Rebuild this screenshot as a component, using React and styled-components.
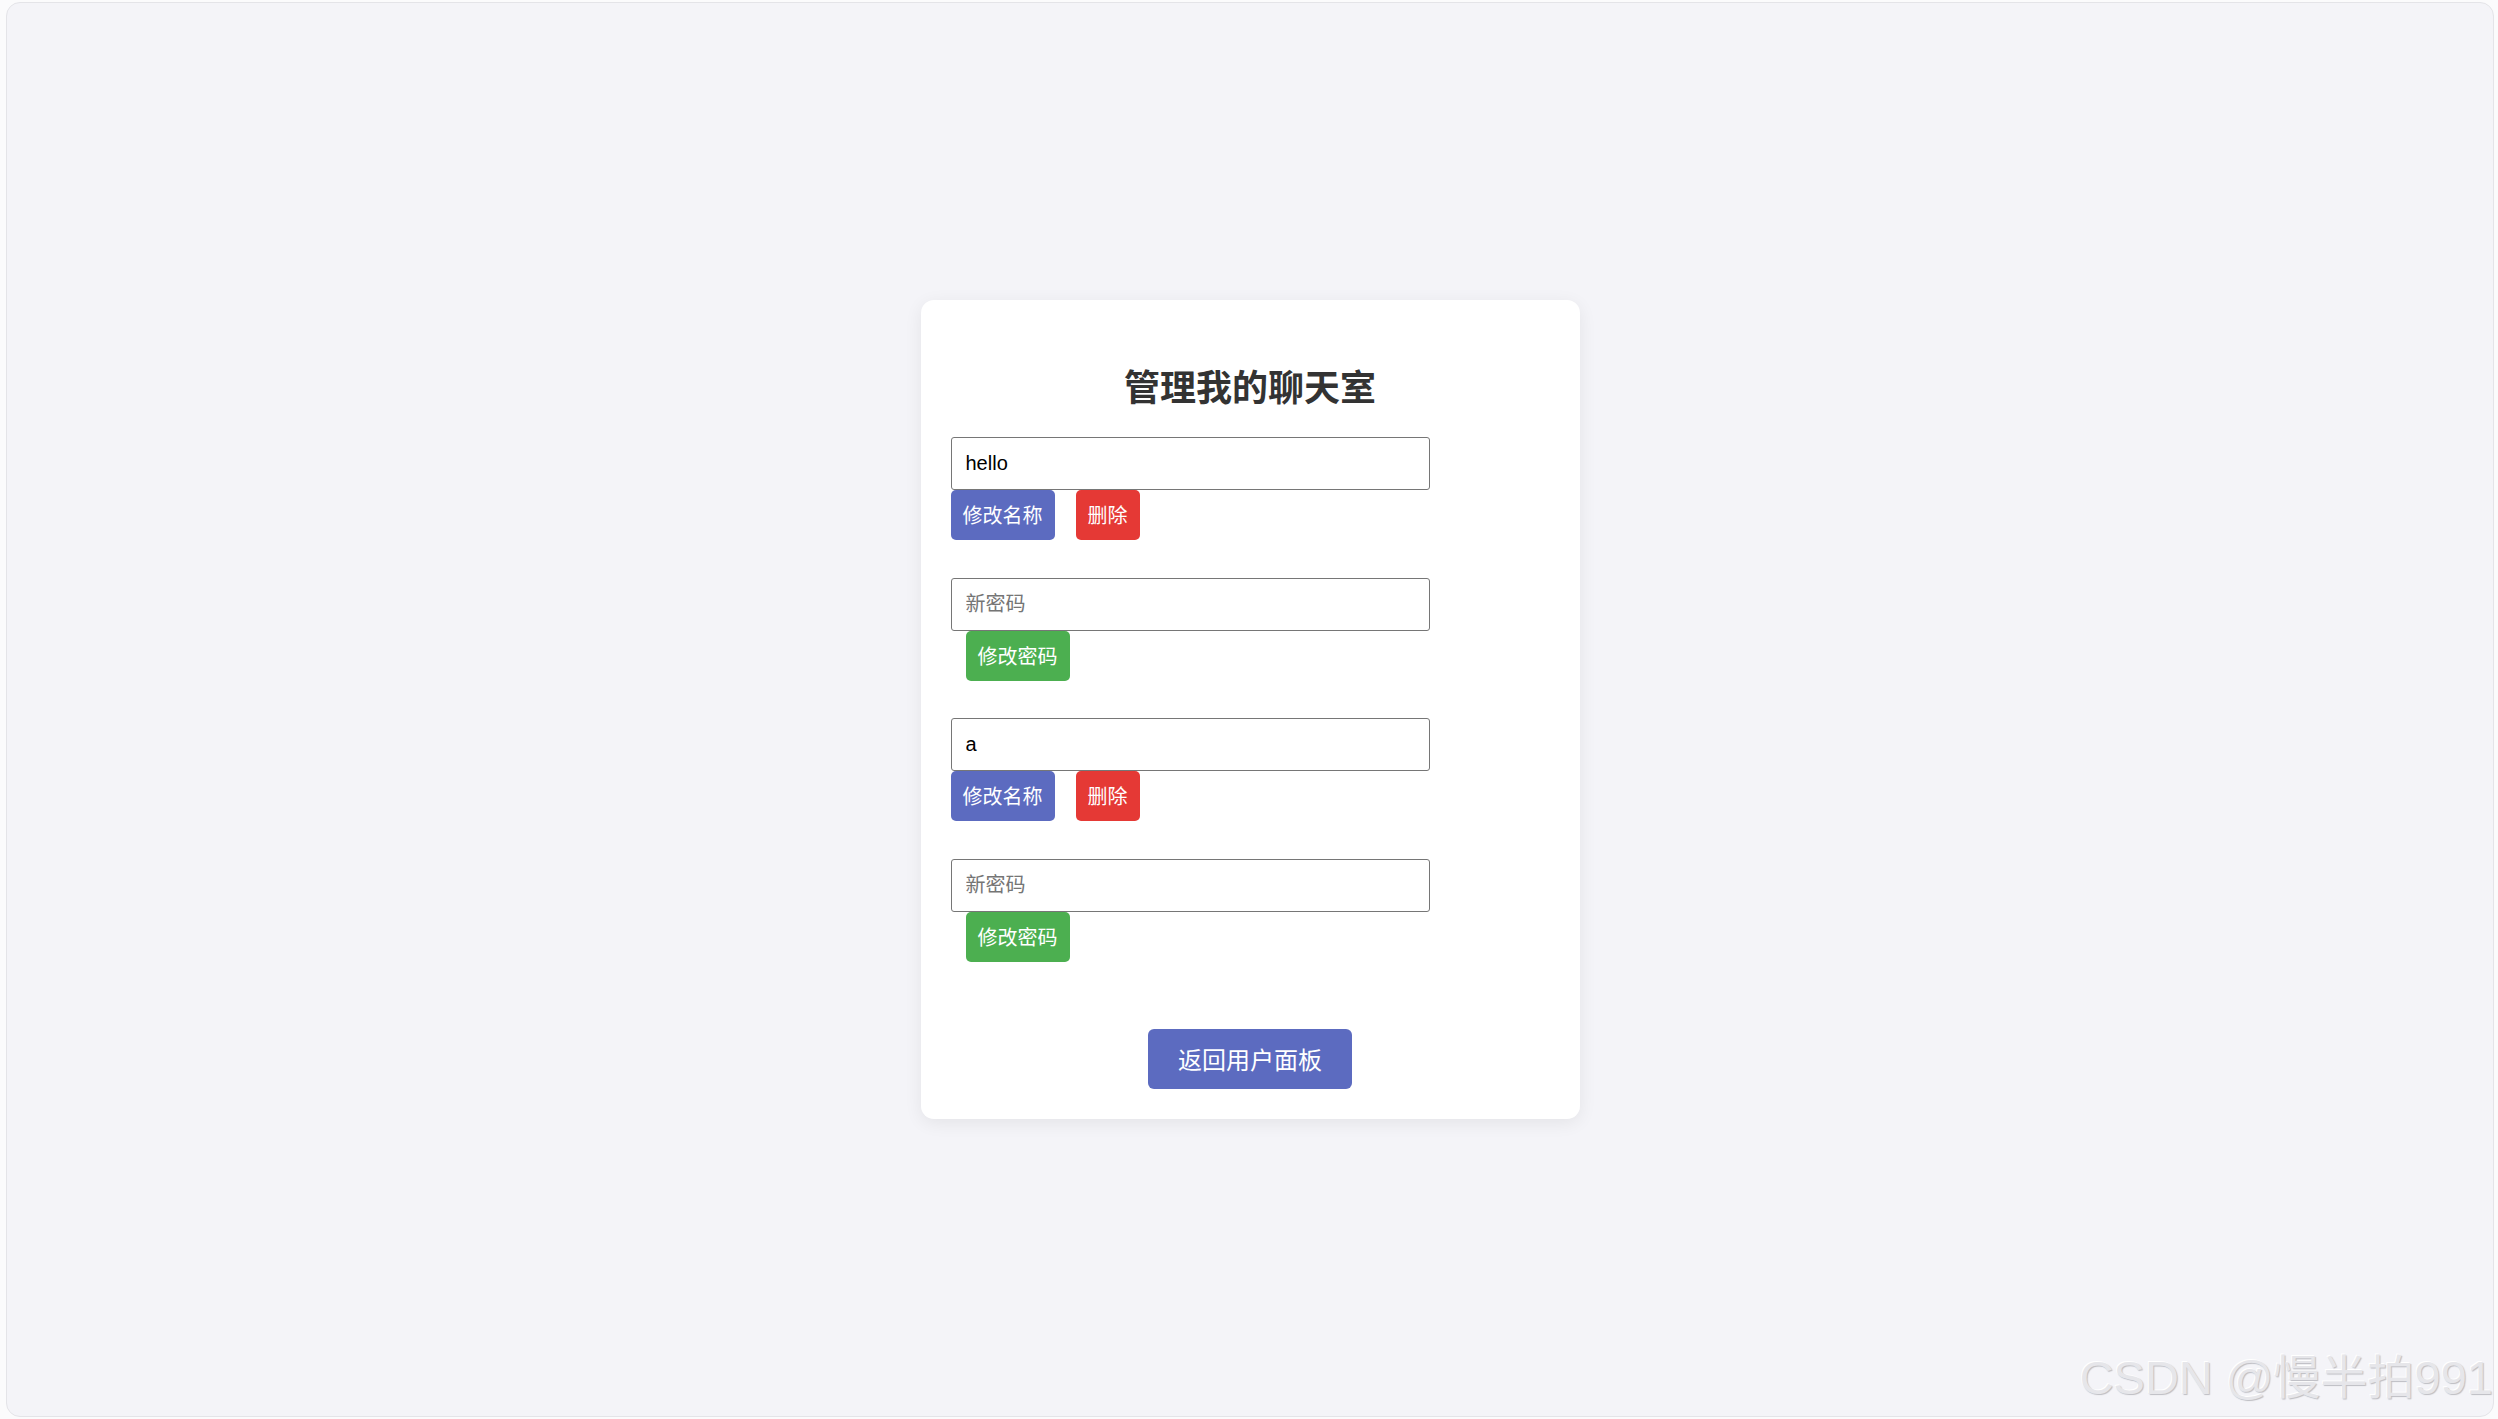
import React from "react";
import styled, { createGlobalStyle } from "styled-components";

const GlobalStyle = createGlobalStyle`
	html, body {
		margin: 0;
		padding: 0;
		background: #fbfbfc;
		font-family: "Liberation Sans", "Noto Sans CJK SC", sans-serif;
	}
	* {
		box-sizing: border-box;
	}
`;

const Frame = styled.div`
	position: relative;
	margin: 2px 4px 2px 6px;
	min-height: calc(100vh - 4px);
	display: flex;
	align-items: center;
	justify-content: center;
	background: #f4f4f8;
	border: 1px solid #e4e4e8;
	border-radius: 14px;
	overflow: hidden;
`;

const Card = styled.div`
	width: 659px;
	padding: 30px 30px 30px;
	background: #fff;
	border-radius: 13px;
	box-shadow: 0 4px 18px rgba(0, 0, 0, 0.07);
	display: flex;
	flex-direction: column;
`;

const Title = styled.h2`
	margin: 30px 0 27px;
	text-align: center;
	font-family: "Noto Sans CJK SC", sans-serif;
	font-size: 36px;
	font-weight: 700;
	line-height: 50px;
	color: #333;
`;

const RoomList = styled.div`
	display: flex;
	flex-direction: column;
	gap: 37.5px;
`;

const Block = styled.div`
	display: flex;
	flex-direction: column;
	align-items: flex-start;
`;

const Field = styled.input`
	width: 479px;
	height: 53px;
	padding: 0 14px;
	border: 1px solid #767676;
	border-radius: 3px;
	font-family: "Liberation Sans", "Noto Sans CJK SC", sans-serif;
	font-size: 20px;
	color: #000;
	background: #fff;
	outline: none;

	&::placeholder {
		color: #757575;
	}
`;

const Actions = styled.div`
	display: flex;
	gap: 21px;
	padding-left: ${(p) => p.$indent || 0}px;
`;

const colors = {
	blue: "#5c6bc0",
	red: "#e53935",
	green: "#4caf50",
};

const Btn = styled.button`
	height: 50px;
	padding: 0 12px;
	border: none;
	border-radius: 5px;
	background: ${(p) => colors[p.$tone]};
	color: #fff;
	font-family: "Noto Sans CJK SC", sans-serif;
	font-size: 20px;
	line-height: 1;
	cursor: pointer;
`;

const Footer = styled.div`
	display: flex;
	justify-content: center;
	margin-top: 67.5px;
`;

const BackBtn = styled.button`
	height: 60px;
	padding: 0 30px;
	border: none;
	border-radius: 6px;
	background: #5c6bc0;
	color: #fff;
	font-family: "Noto Sans CJK SC", sans-serif;
	font-size: 24px;
	line-height: 1;
	cursor: pointer;
`;

const Watermark = styled.div`
	position: absolute;
	right: 0;
	bottom: 15px;
	font-family: "Liberation Sans", "Noto Sans CJK SC", sans-serif;
	font-size: 47px;
	line-height: 1;
	color: #e6e6ea;
	text-shadow: 1px 1px 1px #bdbdc2, -1px -1px 0 #fff;
	white-space: nowrap;
	pointer-events: none;
`;

const rooms = [{ id: 1, name: "hello" }, { id: 2, name: "a" }];

const App = () => {
	return (
		<>
			<GlobalStyle />
			<Frame>
				<Card>
					<Title>管理我的聊天室</Title>
					<RoomList>
						{rooms.map((r) => (
							<React.Fragment key={r.id}>
								<Block>
									<Field defaultValue={r.name} />
									<Actions>
										<Btn $tone="blue">修改名称</Btn>
										<Btn $tone="red">删除</Btn>
									</Actions>
								</Block>
								<Block>
									<Field placeholder="新密码" type="password" />
									<Actions $indent={15}>
										<Btn $tone="green">修改密码</Btn>
									</Actions>
								</Block>
							</React.Fragment>
						))}
					</RoomList>
					<Footer>
						<BackBtn>返回用户面板</BackBtn>
					</Footer>
				</Card>
				<Watermark>CSDN @慢半拍991</Watermark>
			</Frame>
		</>
	);
};

export default App;
